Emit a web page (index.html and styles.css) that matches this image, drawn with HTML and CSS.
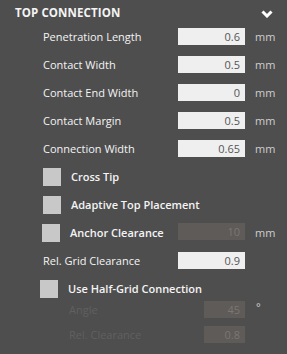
FILE: index.html
```html
<!DOCTYPE html>
<html lang="en">
<head>
    <meta charset="UTF-8">
    <title>Top Connection</title>
    <link rel="stylesheet" href="styles.css">
</head>
<body>
    <div class="panel">
        <div class="panel-head">
            <span class="panel-title">TOP CONNECTION</span>
            <svg class="chevron" width="12" height="8" viewBox="0 0 12 8"><polyline points="1.5,1.5 6,6 10.5,1.5" fill="none" stroke="#fff" stroke-width="3"/></svg>
        </div>

        <div class="row"><span class="label">Penetration Length</span><input class="field" value="0.6"><span class="unit">mm</span></div>
        <div class="row"><span class="label">Contact Width</span><input class="field" value="0.5"><span class="unit">mm</span></div>
        <div class="row"><span class="label">Contact End Width</span><input class="field" value="0"><span class="unit">mm</span></div>
        <div class="row"><span class="label">Contact Margin</span><input class="field" value="0.5"><span class="unit">mm</span></div>
        <div class="row"><span class="label">Connection Width</span><input class="field" value="0.65"><span class="unit">mm</span></div>

        <div class="row check-row"><span class="box"></span><span class="check-label">Cross Tip</span></div>
        <div class="row check-row"><span class="box"></span><span class="check-label">Adaptive Top Placement</span></div>
        <div class="row check-row anchor"><span class="box"></span><span class="check-label short">Anchor Clearance</span><input class="field" value="10" disabled><span class="unit">mm</span></div>
        <div class="row"><span class="label">Rel. Grid Clearance</span><input class="field" value="0.9"></div>
        <div class="row check-row half"><span class="box"></span><span class="check-label">Use Half-Grid Connection</span></div>

        <div class="sub-row first"><span class="sub-label">Angle</span><input class="field small" value="45" disabled><span class="unit deg">°</span></div>
        <div class="sub-row"><span class="sub-label">Rel. Clearance</span><input class="field small" value="0.8" disabled></div>
    </div>
</body>
</html>
```

FILE: styles.css
```css
body {margin: 0; background-color: #4e4e4e; font-family: 'Open Sans', sans-serif; font-size: 11px; color: #f4f4f4;}
.panel {width: 287px; height: 354px;}
.panel-head {height: 22px; display: flex; align-items: center; justify-content: space-between; padding: 0 14px 0 15px;}
.panel-title {font-weight: bold; font-size: 11.5px; letter-spacing: 0.1px; margin-top: 2px;}
.chevron {margin-top: 6px;}
.row {height: 28px; display: flex; align-items: center; padding-left: 43px;}
.label {width: 135px;}
.field {width: 67px; height: 17px; box-sizing: border-box; border: none; padding: 0 5px 0 0; margin: 0; background-color: #efefef; color: #555; text-align: right; font-family: 'Open Sans', sans-serif; font-size: 11px; outline: none;}
.field:disabled {background-color: #5e5b58; color: #7a7774;}
.unit {margin-left: 10px; color: #cfcfcf;}
.box {width: 18px; height: 18px; background-color: #c8c8c8; margin-top: 1px;}
.check-label {margin-left: 10px; font-weight: 600;}
.check-label.short {width: 108px;}
.anchor {padding-left: 42px;}
.anchor .field {margin-top: -2px;}
.half {padding-left: 40px;}
.sub-row {height: 25px; display: flex; align-items: center; padding-left: 69px;}
.sub-row.first {margin-top: -5px;}
.sub-label {width: 135px; color: #606060;}
.field.small {width: 41px;}
.deg {margin-left: 11px; margin-top: -6px;}
```
